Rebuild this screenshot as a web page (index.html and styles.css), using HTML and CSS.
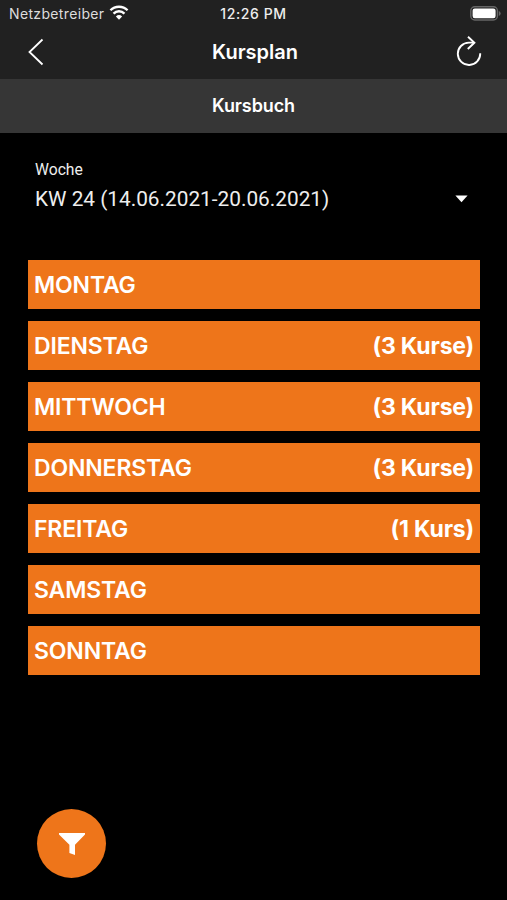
FILE: index.html
```html
<!DOCTYPE html>
<html lang="de">
<head>
  <meta charset="UTF-8">
  <meta name="viewport" content="width=device-width, initial-scale=1.0">
  <title>Kursplan</title>
  <link rel="stylesheet" href="styles.css">
</head>
<body>
  <!-- Statusleiste -->
  <div class="status">
    <div class="carrier">
      <span class="carrier-name">Netzbetreiber</span>
      <svg class="wifi" width="20" height="15" viewBox="0 0 18 14">
        <path d="M1 4.9a11.4 11.4 0 0 1 16 0M3.9 8a7.2 7.2 0 0 1 10.2 0" fill="none" stroke="#fff" stroke-width="2.2"/>
        <path d="M9 13.8l-2.9-3.1a4.2 4.2 0 0 1 5.8 0z" fill="#fff"/>
      </svg>
    </div>
    <span class="time">12:26 PM</span>
    <svg class="battery" width="31" height="15" viewBox="0 0 31 15">
      <rect x=".8" y=".8" width="26.6" height="13.2" rx="4" fill="none" stroke="#666" stroke-width="1.4"/>
      <rect x="2.6" y="2.6" width="23" height="9.6" rx="2.2" fill="#fff"/>
      <path d="M28.8 5a2.6 2.6 0 0 1 0 5z" fill="#666"/>
    </svg>
  </div>

  <!-- Navigation -->
  <div class="nav">
    <svg class="back" width="16" height="28" viewBox="0 0 16 28">
      <path d="M14.5 1.5L1.5 14l13 12.5" fill="none" stroke="#fff" stroke-width="1.8"/>
    </svg>
    <h1>Kursplan</h1>
    <svg class="reload" width="26" height="30" viewBox="0 0 26 30">
      <path d="M18 6.6H12.9A11.2 11.2 0 1 0 24.2 17.3" fill="none" stroke="#fff" stroke-width="1.9"/>
      <path d="M12 .8l6.4 5.9-6.6 6.3" fill="none" stroke="#fff" stroke-width="1.9"/>
    </svg>
  </div>
  <h2>Kursbuch</h2>

  <!-- Auswahl der Woche -->
  <div class="week">
    <div class="week-label">Woche</div>
    <div class="week-select">
      <span class="week-value">KW 24 (14.06.2021-20.06.2021)</span>
      <svg width="13" height="8" viewBox="0 0 13 8"><path d="M.4.6h12.2L6.5 7.2z" fill="#fff"/></svg>
    </div>
  </div>

  <!-- Wochentage -->
  <div class="days">
    <div class="day"><span>MONTAG</span></div>
    <div class="day"><span>DIENSTAG</span><span class="count">(3 Kurse)</span></div>
    <div class="day"><span>MITTWOCH</span><span class="count">(3 Kurse)</span></div>
    <div class="day"><span>DONNERSTAG</span><span class="count">(3 Kurse)</span></div>
    <div class="day"><span>FREITAG</span><span class="count">(1 Kurs)</span></div>
    <div class="day"><span>SAMSTAG</span></div>
    <div class="day"><span>SONNTAG</span></div>
  </div>

  <button class="filter" aria-label="Filter">
    <svg width="28" height="24" viewBox="0 0 28 24">
      <path d="M1 1h26v1.6L17 12.8V23l-5.6-2V12.8L1 2.6z" fill="#fff"/>
    </svg>
  </button>
</body>
</html>
```

FILE: styles.css
```css
* {
  box-sizing: border-box;
}
body {
  margin: 0;
  height: 900px;
  display: flex;
  flex-direction: column;
  background: #000;
  color: #fff;
  font-family: Inter, "Liberation Sans", sans-serif;
  overflow: hidden;
}
svg {
  display: block;
}
.status {
  display: grid;
  grid-template-columns: 1fr auto 1fr;
  align-items: center;
  height: 27px;
  padding: 0 6px 0 9px;
  background: #212121;
  font-size: 14px;
}
.carrier {
  display: flex;
  align-items: center;
  gap: 5px;
  color: #ddd;
}
.carrier-name {
  letter-spacing: 0.35px;
}
.wifi {
  margin-top: -2px;
}
.time {
  margin-right: 3px;
  font-weight: 500;
  font-size: 14px;
  letter-spacing: 0.6px;
  color: #eee;
}
.battery {
  justify-self: end;
  margin-top: -1px;
}
.nav {
  display: grid;
  grid-template-columns: 1fr auto 1fr;
  align-items: center;
  height: 52px;
  padding: 0 25px 0 28px;
  background: #212121;
}
.back {
  margin-top: -2px;
}
.reload {
  justify-self: end;
  margin-top: -4px;
}
h1 {
  margin: -2px 0 0;
  font-size: 20px;
  font-weight: 600;
}
h2 {
  margin: 0;
  height: 54px;
  line-height: 54px;
  background: #363636;
  text-align: center;
  font-size: 18px;
  font-weight: 600;
  letter-spacing: -0.1px;
}
.week {
  padding: 27px 39px 0 35px;
  font-family: Roboto, "Liberation Sans", sans-serif;
}
.week-label {
  font-size: 15.7px;
  line-height: 20px;
  color: #eee;
}
.week-select {
  display: flex;
  align-items: center;
  justify-content: space-between;
  height: 38px;
  font-size: 20.8px;
  color: #eee;
}
.days {
  display: flex;
  flex-direction: column;
  gap: 12px;
  margin: 42px 27px 0 28px;
}
.day {
  display: flex;
  align-items: center;
  justify-content: space-between;
  height: 49px;
  padding: 0 6px;
  background: #ee751a;
  font-size: 23px;
  font-weight: 600;
  letter-spacing: -0.15px;
}
.count {
  font-weight: 700;
  letter-spacing: -0.2px;
}
.filter {
  display: flex;
  align-items: center;
  justify-content: center;
  width: 69px;
  height: 69px;
  margin: auto 0 22px 37px;
  padding: 0;
  border: none;
  border-radius: 50%;
  background: #ee751a;
}
```
